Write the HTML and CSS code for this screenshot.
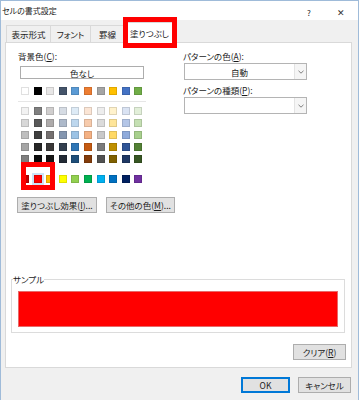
FILE: index.html
```html
<!DOCTYPE html>
<html lang="ja">
<head>
    <meta charset="UTF-8">
    <title>セルの書式設定</title>
    <link rel="stylesheet" href="styles.css">
</head>
<body>
    <div class="dialog">
        <div class="titlebar">
            <span class="title">セルの書式設定</span>
            <span class="help">?</span>
            <span class="close">✕</span>
        </div>

        <div class="tabs">
            <div class="tab">表示形式</div>
            <div class="tab">フォント</div>
            <div class="tab">罫線</div>
            <div class="tab active">塗りつぶし</div>
        </div>

        <div class="panel">
            <div class="top">
                <div class="col-left">
                    <div class="label">背景色(<u>C</u>):</div>
                    <div class="btn nocolor">色なし</div>

                    <div class="swatches">
                        <div class="row">
                            <span class="sw" style="background:#ffffff"></span>
                            <span class="sw" style="background:#000000"></span>
                            <span class="sw" style="background:#e7e6e6"></span>
                            <span class="sw" style="background:#44546a"></span>
                            <span class="sw" style="background:#5b9bd5"></span>
                            <span class="sw" style="background:#ed7d31"></span>
                            <span class="sw" style="background:#a5a5a5"></span>
                            <span class="sw" style="background:#ffc000"></span>
                            <span class="sw" style="background:#4472c4"></span>
                            <span class="sw" style="background:#70ad47"></span>
                        </div>
                        <div class="sep"></div>
                        <div class="tints">
                            <div class="row">
                                <span class="sw" style="background:#f2f2f2"></span>
                                <span class="sw" style="background:#7f7f7f"></span>
                                <span class="sw" style="background:#d0cece"></span>
                                <span class="sw" style="background:#d6dce4"></span>
                                <span class="sw" style="background:#deebf6"></span>
                                <span class="sw" style="background:#fbe5d5"></span>
                                <span class="sw" style="background:#ededed"></span>
                                <span class="sw" style="background:#fff2cc"></span>
                                <span class="sw" style="background:#dae3f3"></span>
                                <span class="sw" style="background:#e2efd9"></span>
                            </div>
                            <div class="row">
                                <span class="sw" style="background:#d8d8d8"></span>
                                <span class="sw" style="background:#595959"></span>
                                <span class="sw" style="background:#aeabab"></span>
                                <span class="sw" style="background:#adb9ca"></span>
                                <span class="sw" style="background:#bdd7ee"></span>
                                <span class="sw" style="background:#f7cbac"></span>
                                <span class="sw" style="background:#dbdbdb"></span>
                                <span class="sw" style="background:#fee599"></span>
                                <span class="sw" style="background:#b4c6e7"></span>
                                <span class="sw" style="background:#c5e0b3"></span>
                            </div>
                            <div class="row">
                                <span class="sw" style="background:#bfbfbf"></span>
                                <span class="sw" style="background:#3f3f3f"></span>
                                <span class="sw" style="background:#757070"></span>
                                <span class="sw" style="background:#8496b0"></span>
                                <span class="sw" style="background:#9cc3e5"></span>
                                <span class="sw" style="background:#f4b183"></span>
                                <span class="sw" style="background:#c9c9c9"></span>
                                <span class="sw" style="background:#ffd965"></span>
                                <span class="sw" style="background:#8eaadb"></span>
                                <span class="sw" style="background:#a8d08d"></span>
                            </div>
                            <div class="row">
                                <span class="sw" style="background:#a5a5a5"></span>
                                <span class="sw" style="background:#262626"></span>
                                <span class="sw" style="background:#3a3838"></span>
                                <span class="sw" style="background:#323f4f"></span>
                                <span class="sw" style="background:#2e75b5"></span>
                                <span class="sw" style="background:#c55a11"></span>
                                <span class="sw" style="background:#7b7b7b"></span>
                                <span class="sw" style="background:#bf9000"></span>
                                <span class="sw" style="background:#2f5496"></span>
                                <span class="sw" style="background:#538135"></span>
                            </div>
                            <div class="row">
                                <span class="sw" style="background:#7f7f7f"></span>
                                <span class="sw" style="background:#0c0c0c"></span>
                                <span class="sw" style="background:#171616"></span>
                                <span class="sw" style="background:#222a35"></span>
                                <span class="sw" style="background:#1e4e79"></span>
                                <span class="sw" style="background:#833c0b"></span>
                                <span class="sw" style="background:#525252"></span>
                                <span class="sw" style="background:#7f6000"></span>
                                <span class="sw" style="background:#1f3864"></span>
                                <span class="sw" style="background:#375623"></span>
                            </div>
                        </div>
                        <div class="row standard">
                            <span class="sw" style="background:#c00000"></span>
                            <span class="sw selected" style="background:#ff0000"></span>
                            <span class="sw" style="background:#ffc000"></span>
                            <span class="sw" style="background:#ffff00"></span>
                            <span class="sw" style="background:#92d050"></span>
                            <span class="sw" style="background:#00b050"></span>
                            <span class="sw" style="background:#00b0f0"></span>
                            <span class="sw" style="background:#0070c0"></span>
                            <span class="sw" style="background:#002060"></span>
                            <span class="sw" style="background:#7030a0"></span>
                        </div>
                    </div>

                    <div class="btn-row">
                        <div class="btn effect">塗りつぶし効果(<u>I</u>)...</div>
                        <div class="btn other">その他の色(<u>M</u>)...</div>
                    </div>
                </div>

                <div class="col-right">
                    <div class="label">パターンの色(<u>A</u>):</div>
                    <div class="select">
                        <span class="select-text">自動</span>
                        <span class="select-arrow">
                            <svg width="6" height="4" viewBox="0 0 6 4"><polyline points="0.5,0.8 3,3.2 5.5,0.8" fill="none" stroke="#707070" stroke-width="0.9"/></svg>
                        </span>
                    </div>
                    <div class="label second">パターンの種類(<u>P</u>):</div>
                    <div class="select">
                        <span class="select-text"></span>
                        <span class="select-arrow">
                            <svg width="6" height="4" viewBox="0 0 6 4"><polyline points="0.5,0.8 3,3.2 5.5,0.8" fill="none" stroke="#707070" stroke-width="0.9"/></svg>
                        </span>
                    </div>
                </div>
            </div>

            <fieldset class="sample">
                <legend>サンプル</legend>
                <div class="sample-fill"></div>
            </fieldset>

            <div class="clear-row">
                <div class="btn clear">クリア(<u>R</u>)</div>
            </div>
        </div>

        <div class="footer">
            <div class="btn ok">OK</div>
            <div class="btn cancel">キャンセル</div>
        </div>

        <!-- red annotation boxes -->
        <div class="mark mark-tab"></div>
        <div class="mark mark-swatch"></div>
    </div>
</body>
</html>
```

FILE: styles.css
```css
body {
    margin: 0;
    font-family: "Noto Sans CJK JP", "Noto Sans", sans-serif;
    font-size: 8.5px;
    color: #1a1a1a;
    font-feature-settings: "palt";
}
u {
    text-decoration-thickness: 1px;
    text-underline-offset: 1px;
}
.dialog {
    position: relative;
    width: 359px;
    height: 400px;
    box-sizing: border-box;
    background-color: #f0f0f0;
    border: 1px solid #9fbbd9;
    border-bottom: none;
    overflow: hidden;
}
.titlebar {
    height: 19px;
    background-color: #ffffff;
    display: flex;
    align-items: center;
    font-size: 8px;
}
.title {
    margin-left: 1px;
    flex: 1;
}
.help {
    width: 10px;
    text-align: center;
    margin-right: 22px;
    font-size: 8px;
    margin-top: 3px;
}
.close {
    width: 10px;
    text-align: center;
    margin-right: 12px;
    font-size: 9px;
    color: #333;
    margin-top: 3px;
}
.tabs {
    display: flex;
    height: 22px;
    align-items: flex-end;
    padding-left: 5px;
}
.tab {
    height: 17px;
    box-sizing: border-box;
    padding: 0;
    border: 1px solid #d9d9d9;
    border-bottom: none;
    margin-right: -1px;
    background-color: #f0f0f0;
    position: relative;
    display: flex;
    align-items: center;
    justify-content: center;
    white-space: nowrap;
}
.tab:nth-child(1) { width: 45px; }
.tab:nth-child(2) { width: 41px; }
.tab:nth-child(3) { width: 35px; }
.tab.active {
    width: 51px;
    height: 21px;
    background-color: #ffffff;
    margin-bottom: -1px;
    z-index: 1;
}
.panel {
    margin-left: 4px;
    width: 347px;
    height: 326px;
    box-sizing: border-box;
    background-color: #ffffff;
    border: 1px solid #d9d9d9;
    padding: 8px 5px 0 5px;
}
.top {
    display: flex;
}
.col-left {
    width: 165px;
    margin-left: 7px;
}
.label {
    height: 10px;
    line-height: 10px;
    white-space: nowrap;
}
.btn {
    box-sizing: border-box;
    border: 1px solid #adadad;
    background-color: #e1e1e1;
    display: flex;
    align-items: center;
    justify-content: center;
    height: 16px;
    white-space: nowrap;
}
.nocolor {
    margin-top: 5px;
    margin-left: 2px;
    width: 124px;
    height: 13px;
    background-color: #ffffff;
}
.swatches {
    margin-top: 8px;
    margin-left: 3px;
    position: relative;
}
.row {
    display: flex;
    gap: 4.6px;
    height: 8px;
}
.sw {
    width: 8px;
    height: 8px;
    box-sizing: border-box;
    border: 1px solid rgba(0, 0, 0, 0.12);
}
.sep {
    margin: 6px 0 5px -3px;
    width: 128px;
    height: 1px;
    background-color: #e6e6e6;
}
.tints {
    display: flex;
    flex-direction: column;
    gap: 4px;
}
.standard {
    margin-top: 12px;
}
.sw.selected {
    outline: 2px solid #cce4f7;
}
.btn-row {
    display: flex;
    margin-top: 14px;
    margin-left: -1px;
    gap: 9px;
}
.effect { width: 80px; }
.other { width: 69px; }
.col-right {
    width: 124px;
}
.label.second {
    margin-top: 5px;
}
.select {
    margin-top: 2px;
    margin-left: 1px;
    width: 123px;
    height: 17px;
    box-sizing: border-box;
    border: 1px solid #b4b4b4;
    background-color: #ffffff;
    display: flex;
}
.select-text {
    flex: 1;
    display: flex;
    align-items: center;
    justify-content: center;
}
.select-arrow {
    width: 11px;
    border-left: 1px solid #e3e3e3;
    background-color: #f5f5f5;
    display: flex;
    align-items: center;
    justify-content: center;
}
.sample {
    margin: 61px 1px 0 0;
    padding: 7px 6px 5px 1px;
    border: 1px solid #dcdcdc;
    min-width: 0;
}
.sample legend {
    padding: 0;
    line-height: 10px;
    height: 10px;
}
.sample-fill {
    margin-left: 5px;
    height: 36px;
    background-color: #ff0000;
    border: 1px solid #e86a6a;
    box-sizing: border-box;
}
.clear-row {
    display: flex;
    justify-content: flex-end;
    margin-top: 11px;
}
.clear { width: 53px; }
.footer {
    display: flex;
    justify-content: flex-end;
    gap: 8px;
    padding: 9px 7px 0 0;
}
.ok {
    width: 49px;
    border-color: #0078d7;
    box-shadow: inset 0 0 0 1px #0078d7;
}
.cancel { width: 53px; }
.mark {
    position: absolute;
    box-sizing: border-box;
    border: 5px solid #ff0000;
    z-index: 5;
}
.mark-tab {
    left: 122px;
    top: 16px;
    width: 54px;
    height: 31px;
}
.mark-swatch {
    left: 20px;
    top: 161px;
    width: 34px;
    height: 28px;
}
```
